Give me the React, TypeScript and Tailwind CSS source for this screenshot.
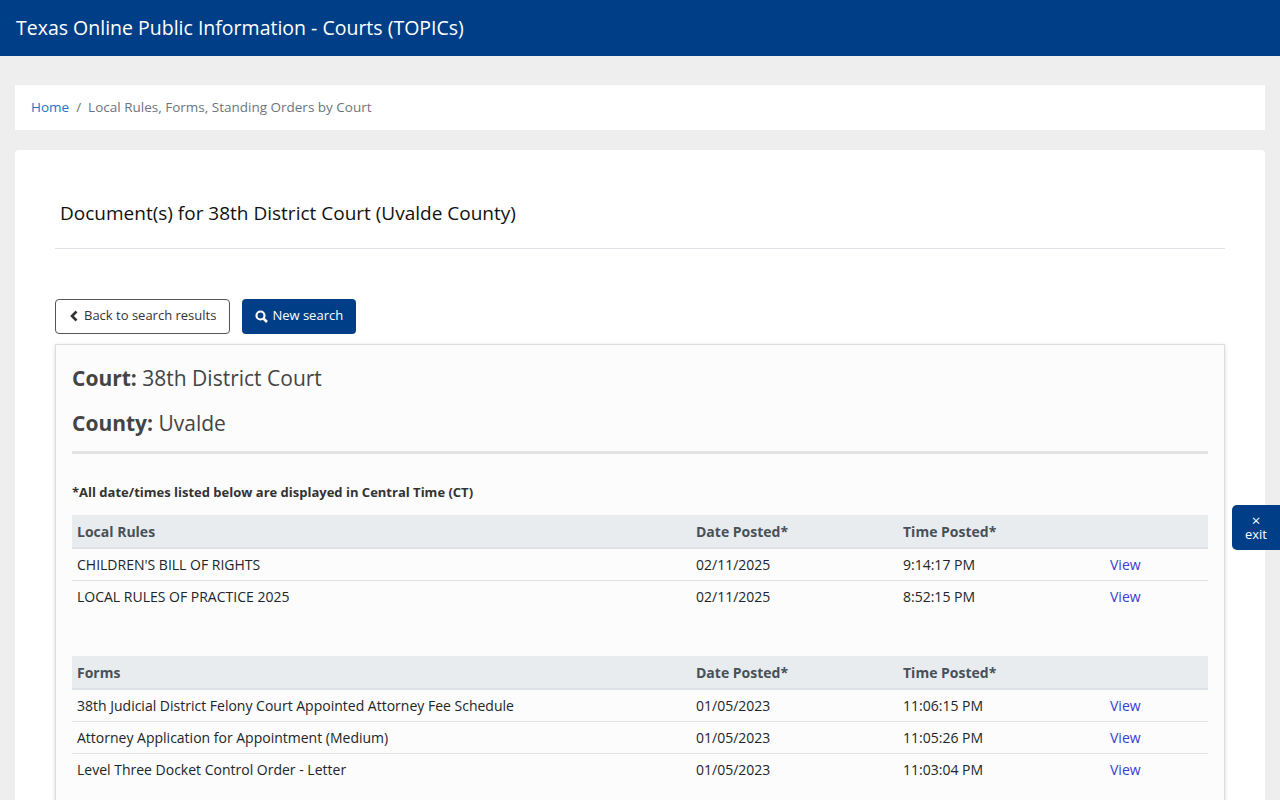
import React from "react";

const F = { fontFamily: '"Open Sans", "Noto Sans", sans-serif' };

function Table({ title, rows }: { title: string; rows: string[][] }) {
  return (
    <table className="w-full text-[14px] text-[#212529] border-collapse">
      <thead>
        <tr className="bg-[#e9ecef] h-[33px] text-left font-bold text-[#495057] border-b-2 border-[#dee2e6]">
          <th className="pl-[5px] w-[619px] font-bold">{title}</th>
          <th className="pl-[5px] w-[207px] font-bold">Date Posted*</th>
          <th className="pl-[5px] w-[207px] font-bold">Time Posted*</th>
          <th></th>
        </tr>
      </thead>
      <tbody>
        {rows.map((r, i) => (
          <tr key={i} className="h-[32px] border-b border-[#dee2e6] last:border-b-0">
            <td className="pl-[5px]">{r[0]}</td>
            <td className="pl-[5px]">{r[1]}</td>
            <td className="pl-[5px]">{r[2]}</td>
            <td className="pl-[5px] text-[#3b3bd6]">View</td>
          </tr>
        ))}
      </tbody>
    </table>
  );
}

export default function App() {
  return (
    <div style={F} className="min-h-[800px] bg-[#eeeeee] relative">
      <div className="h-[56px] bg-[#003f87] text-white text-[19.5px] flex items-center px-[16px]">
        Texas Online Public Information - Courts (TOPICs)
      </div>
      <div className="px-[15px] pt-[29px]">
        <div className="bg-white h-[45px] flex items-center px-[16px] text-[13.5px] text-[#6c757d]">
          <span className="text-[#1a73c9]">Home</span>
          <span className="mx-[7px]">/</span>
          <span>Local Rules, Forms, Standing Orders by Court</span>
        </div>
        <div className="bg-white rounded-[4px] mt-[20px] px-[40px] pt-[49px] pb-[40px]">
          <div className="text-[19px] text-[#111] pl-[5px] pb-[20px] border-b border-[#dee2e6]">
            Document(s) for 38th District Court (Uvalde County)
          </div>
          <div className="flex gap-[12px] mt-[50px]">
            <button className="h-[35px] px-[13px] border border-[#555] rounded-[4px] text-[13px] text-[#333] bg-white flex items-center gap-[5px]">
              <svg width="10" height="12" viewBox="0 0 10 12"><path d="M7.5 1.5 3 6l4.5 4.5" stroke="#333" strokeWidth="2.6" fill="none" /></svg>
              Back to search results
            </button>
            <button className="h-[35px] px-[13px] rounded-[4px] text-[13px] text-white bg-[#003f87] flex items-center gap-[4px]">
              <svg width="13" height="13" viewBox="0 0 13 13"><circle cx="5.5" cy="5.5" r="4" stroke="white" strokeWidth="2.2" fill="none" /><path d="M8.5 8.5l3.5 3.5" stroke="white" strokeWidth="2.6" /></svg>
              New search
            </button>
          </div>
          <div className="mt-[10px] border border-[#ddd] bg-[#fcfcfc] shadow-[0_1px_4px_rgba(0,0,0,0.15)] px-[16px] pt-[18px] pb-[20px]">
            <div className="text-[21px] text-[#444]"><b>Court:</b> 38th District Court</div>
            <div className="text-[21px] text-[#444] mt-[14px]"><b>County:</b> Uvalde</div>
            <div className="border-b-[3px] border-[#e3e3e3] mt-[11px]"></div>
            <div className="text-[13px] font-bold text-[#333] mt-[29px] mb-[13px]">*All date/times listed below are displayed in Central Time (CT)</div>
            <Table title="Local Rules" rows={[["CHILDREN'S BILL OF RIGHTS", "02/11/2025", "9:14:17 PM"], ["LOCAL RULES OF PRACTICE 2025", "02/11/2025", "8:52:15 PM"]]} />
            <div className="h-[44px]"></div>
            <Table title="Forms" rows={[["38th Judicial District Felony Court Appointed Attorney Fee Schedule", "01/05/2023", "11:06:15 PM"], ["Attorney Application for Appointment (Medium)", "01/05/2023", "11:05:26 PM"], ["Level Three Docket Control Order - Letter", "01/05/2023", "11:03:04 PM"]]} />
          </div>
        </div>
      </div>
      <div className="absolute left-[1232px] top-[505px] w-[48px] h-[45px] bg-[#003f87] rounded-l-[5px] text-white text-[13px] flex flex-col items-center justify-center">
        <span className="leading-[14px] text-[15px]">×</span>
        <span className="leading-[15px]">exit</span>
      </div>
    </div>
  );
}
